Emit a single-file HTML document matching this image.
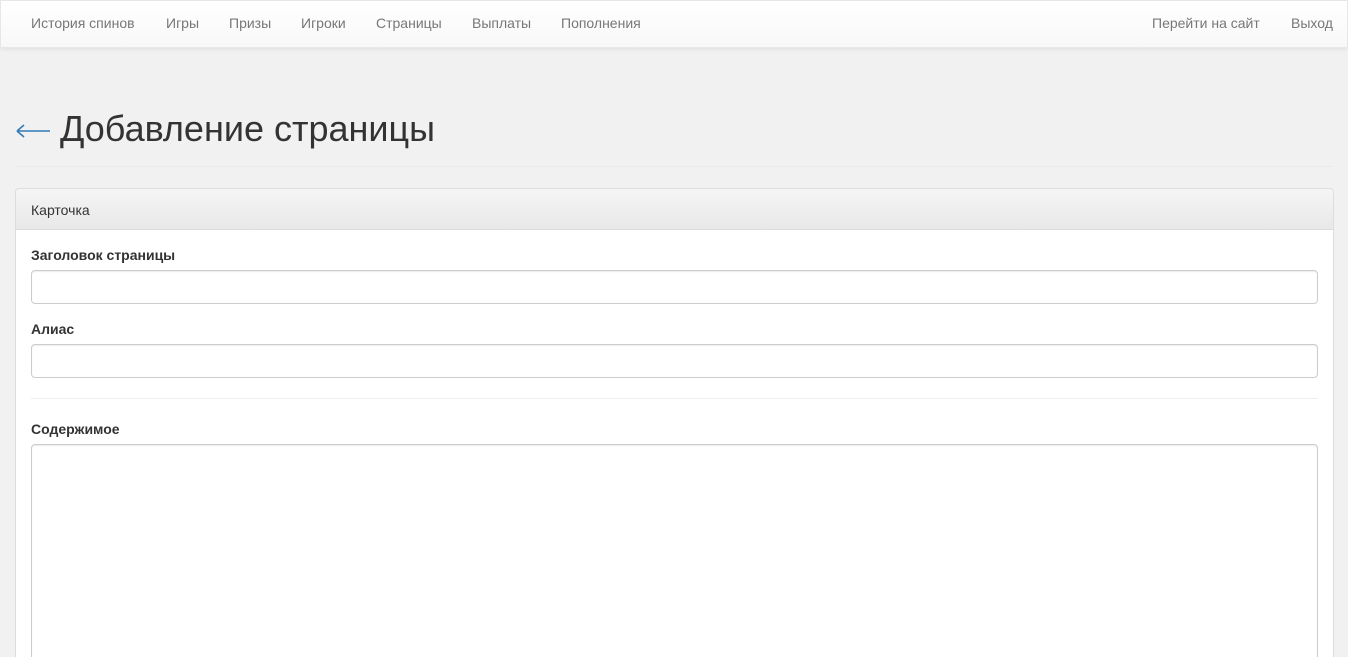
<!DOCTYPE html>
<html style="height:657px;overflow:hidden"><head><meta charset="utf-8"><style>
*{box-sizing:border-box}
body{margin:0;background:#f1f1f1;font-family:"Liberation Sans",Arial,sans-serif;font-size:14px;color:#333;width:1348px;height:657px;overflow:hidden;position:relative}
.nav{position:absolute;left:0;top:0;width:1348px;height:48px;background:linear-gradient(#fff,#f8f8f8);border:1px solid #e7e7e7;box-shadow:0 1px 5px rgba(0,0,0,.08)}
.nav a{position:absolute;top:14px;color:#777;text-decoration:none;font-size:14px}
h1{position:absolute;left:60px;top:108px;margin:0;font-size:36px;font-weight:400;color:#333;line-height:42px}
.hr{position:absolute;left:15px;top:166px;width:1318px;border-top:1px solid #eaeaea}
.panel{position:absolute;left:15px;top:188px;width:1319px;height:469px;background:#fff;border:1px solid #ddd;border-bottom:none;border-radius:4px 4px 0 0;overflow:hidden}
.ph{height:41px;background:linear-gradient(#f5f5f5,#e8e8e8);border-bottom:1px solid #ddd;padding:13px 15px;font-size:14px;line-height:16px}
label{position:absolute;left:15px;font-weight:bold;font-size:14px}
.in{position:absolute;left:15px;width:1287px;border:1px solid #ccc;border-radius:4px;box-shadow:inset 0 1px 1px rgba(0,0,0,.075)}
</style></head><body>
<div class="nav">
<a style="left:30px">История спинов</a><a style="left:165px">Игры</a><a style="left:228px">Призы</a><a style="left:300px">Игроки</a><a style="left:375px">Страницы</a><a style="left:471px">Выплаты</a><a style="left:560px">Пополнения</a>
<a style="left:1151px">Перейти на сайт</a><a style="left:1290px">Выход</a>
</div>
<svg style="position:absolute;left:16px;top:124px" width="36" height="14" viewBox="0 0 36 14"><path d="M1 7H34M1 7L8 1M1 7L8 13" stroke="#337ab7" stroke-width="1.6" fill="none"/></svg>
<h1>Добавление страницы</h1>
<div class="hr"></div>
<div class="panel">
<div class="ph">Карточка</div>
<label style="top:58px">Заголовок страницы</label>
<div class="in" style="top:81px;height:34px"></div>
<label style="top:132px">Алиас</label>
<div class="in" style="top:155px;height:34px"></div>
<div style="position:absolute;left:15px;top:209px;width:1287px;border-top:1px solid #eee"></div>
<label style="top:232px">Содержимое</label>
<div class="in" style="top:255px;height:230px"></div>
</div>
</body></html>
